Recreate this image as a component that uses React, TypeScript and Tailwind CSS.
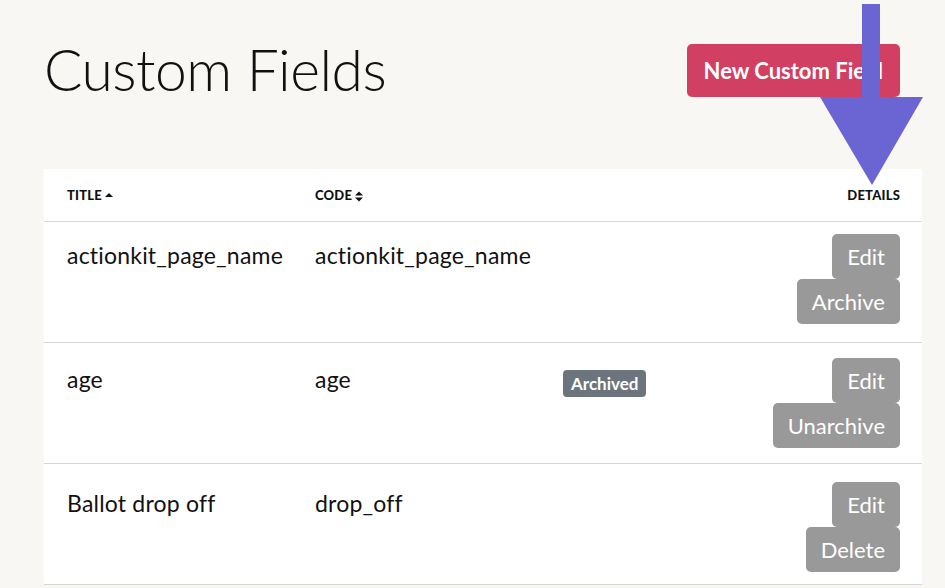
import React from "react";

const rows = [
  { title: "actionkit_page_name", code: "actionkit_page_name", archived: false, action: "Archive", pt: "pt-[12px]", pb: "pt-[11px]" },
  { title: "age", code: "age", archived: true, action: "Unarchive", pt: "pt-[15px]", pb: "pt-[14px]" },
  { title: "Ballot drop off", code: "drop_off", archived: false, action: "Delete", pt: "pt-[18px]", pb: "pt-[17px]" },
];

function CaretUp() {
  return (
    <svg width="8" height="6" viewBox="0 0 8 6" className="ml-[3px] mb-[3px]">
      <path d="M0 5 L4 1 L8 5 Z" fill="#111" />
    </svg>
  );
}

function CaretBoth() {
  return (
    <svg width="8" height="11" viewBox="0 0 8 11" className="ml-[3px]">
      <path d="M0 4.5 L4 0.5 L8 4.5 Z" fill="#111" />
      <path d="M0 6.5 L4 10.5 L8 6.5 Z" fill="#111" />
    </svg>
  );
}

function Btn({ children }: { children: React.ReactNode }) {
  return (
    <div className="h-[45px] px-[15px] flex items-center bg-[#999999] text-white text-[22px] rounded-[5px] leading-none whitespace-nowrap">
      {children}
    </div>
  );
}

export default function App() {
  return (
    <div
      className="relative w-[945px] h-[588px] overflow-hidden bg-[#f8f7f4] text-[#111]"
      style={{ fontFamily: '"Lato", "Noto Sans", sans-serif' }}
    >
      <div className="pl-[44px] pr-[23px]">
        <div className="flex justify-between pr-[22px] pt-[44px] h-[169px] items-start">
          <h1 className="text-[57px] font-light leading-[53px] tracking-[-0.5px] text-[#111] mt-[-1px]">Custom Fields</h1>
          <div className="h-[53px] px-[17px] flex items-center bg-[#d14062] text-white text-[22px] font-bold rounded-[5px]">
            New Custom Field
          </div>
        </div>
        <div className="bg-white">
          <div className="grid grid-cols-[248px_248px_248px_minmax(0,1fr)] h-[53px] border-b border-[#dadada] items-center text-[13px] font-black uppercase tracking-[0.2px] pt-[2px]">
            <div className="pl-[23px] flex items-center">TITLE<CaretUp /></div>
            <div className="pl-[23px] flex items-center">CODE<CaretBoth /></div>
            <div />
            <div className="pr-[22px] text-right">DETAILS</div>
          </div>
          {rows.map((r) => (
            <div
              key={r.title}
              className="grid grid-cols-[248px_248px_248px_minmax(0,1fr)] h-[121px] border-b border-[#d6d6d6] text-[23px] tracking-[0.2px]"
            >
              <div className={`pl-[23px] leading-[45px] ${r.pb}`}>{r.title}</div>
              <div className={`pl-[23px] leading-[45px] ${r.pb}`}>{r.code}</div>
              <div className="pl-[23px] pt-[27px] flex items-start">
                {r.archived && (
                  <span className="flex items-center h-[27px] px-[8px] bg-[#6c757d] text-white text-[17px] font-bold rounded-[4px] leading-none tracking-normal">
                    Archived
                  </span>
                )}
              </div>
              <div className={`pr-[22px] flex flex-col items-end tracking-normal ${r.pt}`}>
                <Btn>Edit</Btn>
                <Btn>{r.action}</Btn>
              </div>
            </div>
          ))}
        </div>
      </div>
      <svg className="absolute left-0 top-0" width="945" height="200" viewBox="0 0 945 200">
        <rect x="862" y="4" width="18" height="94" fill="#6b65d3" />
        <path d="M820 97 L923 97 L872 185 Z" fill="#6b65d3" />
      </svg>
    </div>
  );
}
